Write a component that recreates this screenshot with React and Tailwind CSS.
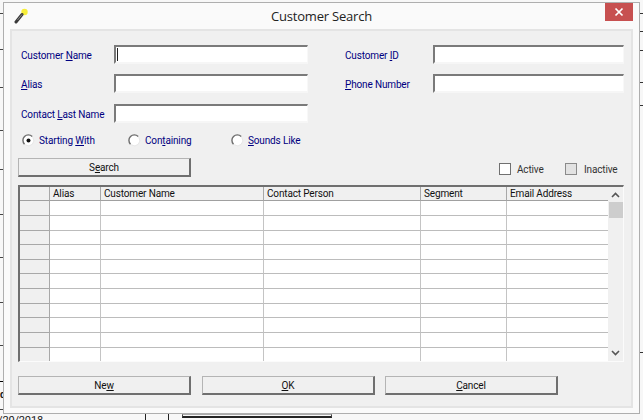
const FONT = "font-['Roboto',Arial,sans-serif]";

function Field({ width, caret }) {
  return (
    <div className={`${width} h-[19px] flex items-center bg-white border-t-2 border-l-2 border-t-[#7a7a7a] border-l-[#7a7a7a] border-r border-b-2 border-r-[#f8f8f8] border-b-[#f6f6f6] pl-px`}>
      {caret && <div className="w-px h-[13px] bg-[#222]" />}
    </div>
  );
}

function Label({ width, children }) {
  return <div className={`${width} pt-[2px] text-[#000080] whitespace-nowrap`}>{children}</div>;
}

function Radio({ width, checked, children }) {
  return (
    <div className={`${width} flex items-center`}>
      <svg width="13" height="13" viewBox="0 0 13 13" className="shrink-0">
        <circle cx="6.5" cy="6.5" r="5" fill="#fff" />
        <path d="M2.5 10.2A5.3 5.3 0 0 1 10.2 2.5" fill="none" stroke="#6e6e6e" strokeWidth="1.4" />
        <path d="M10.8 3.4A5.3 5.3 0 0 1 3.4 10.8" fill="none" stroke="#e8e8e8" strokeWidth="1" />
        {checked && <circle cx="6.5" cy="6.5" r="2" fill="#111" />}
      </svg>
      <span className="ml-[4px] text-[#000080] whitespace-nowrap">{children}</span>
    </div>
  );
}

function Btn({ className, children }) {
  return (
    <div className={`${className} w-[173px] h-[19px] flex items-center justify-center bg-[#f0f0f0] border-t border-l border-t-[#b4b4b4] border-l-[#b4b4b4] border-r-2 border-b-2 border-r-[#6f6f6f] border-b-[#6f6f6f] text-[#111]`}>
      <span>{children}</span>
    </div>
  );
}

const rows = ["h-[15px]","h-[15px]","h-[14px]","h-[15px]","h-[14px]","h-[15px]","h-[15px]","h-[14px]","h-[15px]","h-[15px]"];
const cols = ["Alias", "Customer Name", "Contact Person", "Segment", "Email Address"];

const leftLines = ["top-[13px]","top-[49px]","top-[87px]","top-[130px]","top-[169px]","top-[214px]","top-[257px]","top-[302px]","top-[345px]","top-[409px]"];
const rightLines = ["top-[13px]","top-[31px]","top-[50px]","top-[82px]","top-[105px]","top-[352px]"];

function Row({ h }) {
  const line = "border-r border-b border-r-[#c4c4c4] border-b-[#bcbcbc]";
  return (
    <div className={`grid grid-cols-[30px_51px_163px_157px_86px_101px] ${h}`}>
      <div className="bg-[#f0f0f0] border-r border-b border-r-[#a8a8a8] border-b-[#a8a8a8]" />
      <div className={`bg-white ${line}`} />
      <div className={`bg-white ${line}`} />
      <div className={`bg-white ${line}`} />
      <div className={`bg-white ${line}`} />
      <div className="bg-white border-b border-b-[#bcbcbc]" />
    </div>
  );
}

export default function App() {
  return (
    <div className={`${FONT} relative w-[643px] h-[420px] overflow-hidden bg-[#f7f7f7] text-[10px] leading-[13px] tracking-[-0.15px]`}>
      {leftLines.map((t) => (
        <div key={t} className={`absolute left-0 w-[3px] h-px bg-[#444] ${t}`} />
      ))}
      {rightLines.map((t) => (
        <div key={t} className={`absolute right-0 w-[3px] h-px bg-[#333] ${t}`} />
      ))}
      <div className="absolute left-0 top-[381px] w-[3px] h-px bg-black" />
      <div className="absolute left-0 top-[388px] text-[#111] font-bold">d</div>
      <div className="absolute left-[-2px] top-[414px] text-[11px] text-[#222]">/20/2018</div>
      <div className="absolute left-[145px] top-[414px] w-px h-[6px] bg-[#222]" />
      <div className="absolute left-[168px] top-[414px] w-px h-[6px] bg-[#222]" />
      <div className="absolute left-[182px] top-[414px] w-[150px] h-[4px] border-x border-b-2 border-x-[#444] border-b-[#222] border-t border-t-[#aaa]" />

      {/* Dialog window */}
      <div className="absolute left-[3px] top-[2px] w-[637px] h-[412px] flex flex-col bg-[#fafafa] border border-[#aeaeae]">
        <div className="relative h-[26px] shrink-0 flex items-center justify-center">
          <svg width="14" height="16" viewBox="0 0 14 16" className="absolute left-[10px] top-[5px]">
            <circle cx="10.5" cy="4" r="3.2" fill="#f7ee3a" />
            <path d="M2 14 L8 6.5" stroke="#3a3a3a" strokeWidth="3" strokeLinecap="round" />
            <path d="M3.5 12 L8 6.5" stroke="#8a8a8a" strokeWidth="1" />
          </svg>
          <span className="text-[13px] tracking-[-0.2px] text-[#222] font-['Open_Sans',sans-serif]">Customer Search</span>
          <div className="absolute right-[6px] top-0 w-[28px] h-[18px] bg-[#c75050] flex items-center justify-center">
            <svg width="10" height="10" viewBox="0 0 10 10">
              <path d="M1.5 1.5 L8.5 8.5 M8.5 1.5 L1.5 8.5" stroke="#fff" strokeWidth="1.7" />
            </svg>
          </div>
        </div>

        <div className="mx-[6px] mb-[5px] flex-1 flex flex-col bg-[#f0f0f0] border-2 border-[#e4e4e4] pt-[14px]">
          {/* Search fields */}
          <div className="pl-[9px] flex items-center h-[19px]">
            <Label width="w-[93px]">Customer <u>N</u>ame</Label>
            <Field width="w-[194px]" caret />
            <div className="w-[37px]" />
            <Label width="w-[88px]">Customer <u>I</u>D</Label>
            <Field width="w-[191px]" />
          </div>
          <div className="pl-[9px] flex items-center h-[19px] mt-[10px]">
            <Label width="w-[93px]"><u>A</u>lias</Label>
            <Field width="w-[194px]" />
            <div className="w-[37px]" />
            <Label width="w-[88px]"><u>P</u>hone Number</Label>
            <Field width="w-[191px]" />
          </div>
          <div className="pl-[9px] flex items-center h-[19px] mt-[11px]">
            <Label width="w-[93px]">Contact <u>L</u>ast Name</Label>
            <Field width="w-[194px]" />
          </div>

          {/* Match mode */}
          <div className="pl-[10px] flex items-center h-[13px] mt-[11px]">
            <Radio width="w-[106px]" checked>Starting <u>W</u>ith</Radio>
            <Radio width="w-[103px]">Con<u>t</u>aining</Radio>
            <Radio width="w-[90px]"><u>S</u>ounds Like</Radio>
          </div>

          {/* Search + status */}
          <div className="pl-[6px] flex items-center h-[19px] mt-[11px]">
            <Btn>S<u>e</u>arch</Btn>
            <div className="ml-[308px] w-[12px] h-[12px] mt-[3px] bg-white border border-[#707070]" />
            <span className="ml-[6px] w-[48px] mt-[3px] text-[#333]">Active</span>
            <div className="w-[12px] h-[12px] mt-[3px] bg-[#e2e2e2] border border-[#8a8a8a]" />
            <span className="ml-[7px] mt-[3px] text-[#333]">Inactive</span>
          </div>

          {/* Results grid */}
          <div className="ml-[6px] mt-[8px] w-[606px] h-[177px] flex bg-[#f0f0f0] border-t-2 border-l-2 border-t-[#6f6f6f] border-l-[#6f6f6f] border-r border-b border-r-[#fbfbfb] border-b-[#fbfbfb]">
            <div className="w-[588px] flex flex-col overflow-hidden">
              <div className="grid grid-cols-[30px_51px_163px_157px_86px_101px] h-[14px] shrink-0">
                <div className="border-r border-b border-r-[#a8a8a8] border-b-[#a0a0a0]" />
                {cols.map((c, i) => (
                  <div key={c} className={`pl-[3px] border-b border-b-[#a0a0a0] text-[#111] whitespace-nowrap ${i < 4 ? "border-r border-r-[#a8a8a8]" : ""}`}>{c}</div>
                ))}
              </div>
              {rows.map((h, i) => <Row key={i} h={h} />)}
              <div className="grid grid-cols-[30px_51px_163px_157px_86px_101px] flex-1">
                <div className="bg-[#f0f0f0] border-r border-r-[#a8a8a8]" />
                <div className="bg-white border-r border-r-[#c4c4c4]" />
                <div className="bg-white border-r border-r-[#c4c4c4]" />
                <div className="bg-white border-r border-r-[#c4c4c4]" />
                <div className="bg-white border-r border-r-[#c4c4c4]" />
                <div className="bg-white" />
              </div>
            </div>
            {/* Scrollbar */}
            <div className="w-[15px] flex flex-col items-center">
              <svg width="9" height="6" viewBox="0 0 9 6" className="mt-[5px]">
                <path d="M1 5 L4.5 1.5 L8 5" fill="none" stroke="#555" strokeWidth="1.6" />
              </svg>
              <div className="mt-[4px] w-[14px] h-[16px] bg-[#cdcdcd]" />
              <div className="flex-1" />
              <svg width="9" height="6" viewBox="0 0 9 6" className="mb-[5px]">
                <path d="M1 1 L4.5 4.5 L8 1" fill="none" stroke="#555" strokeWidth="1.6" />
              </svg>
            </div>
          </div>

          {/* Actions */}
          <div className="pl-[6px] flex mt-[14px]">
            <Btn>Ne<u>w</u></Btn>
            <Btn className="ml-[11px]"><u>O</u>K</Btn>
            <Btn className="ml-[10px]"><u>C</u>ancel</Btn>
          </div>
        </div>
      </div>
    </div>
  );
}
